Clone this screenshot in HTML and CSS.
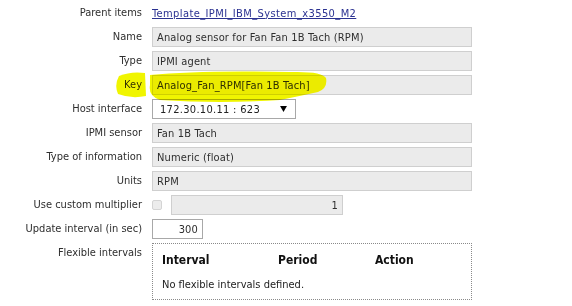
FILE: index.html
```html
<!DOCTYPE html>
<html>
<head>
  <title>Item</title>
  <link rel="stylesheet" href="styles.css">
</head>
<body>
  <div class="page">
    <div class="form">
      <div class="form-label">Parent items</div>
      <div class="form-field"><a class="parent-link" href="#">Template_IPMI_IBM_System_x3550_M2</a></div>

      <div class="form-label">Name</div>
      <div class="form-field"><input class="text-input" type="text" value="Analog sensor for Fan Fan 1B Tach (RPM)" readonly></div>

      <div class="form-label">Type</div>
      <div class="form-field"><input class="text-input" type="text" value="IPMI agent" readonly></div>

      <div class="form-label">Key</div>
      <div class="form-field"><input class="text-input" type="text" value="Analog_Fan_RPM[Fan 1B Tach]" readonly></div>

      <div class="form-label">Host interface</div>
      <div class="form-field">
        <div class="select-box">
          <span>172.30.10.11 : 623</span>
          <svg class="select-arrow" viewBox="0 0 8 7"><path d="M0 0h8L4 7z" fill="#000"/></svg>
        </div>
      </div>

      <div class="form-label">IPMI sensor</div>
      <div class="form-field"><input class="text-input" type="text" value="Fan 1B Tach" readonly></div>

      <div class="form-label">Type of information</div>
      <div class="form-field"><input class="text-input" type="text" value="Numeric (float)" readonly></div>

      <div class="form-label">Units</div>
      <div class="form-field"><input class="text-input" type="text" value="RPM" readonly></div>

      <div class="form-label">Use custom multiplier</div>
      <div class="form-field multiplier-row">
        <span class="checkbox"></span>
        <input class="text-input multiplier-input" type="text" value="1" readonly>
      </div>

      <div class="form-label">Update interval (in sec)</div>
      <div class="form-field"><input class="number-input" type="text" value="300"></div>

      <div class="form-label">Flexible intervals</div>
      <div class="form-field">
        <div class="flex-box">
          <div class="flex-head">
            <span class="col-interval">Interval</span>
            <span class="col-period">Period</span>
            <span class="col-action">Action</span>
          </div>
          <div class="flex-empty">No flexible intervals defined.</div>
        </div>
      </div>
    </div>

    <!-- marker scribble over the key row -->
    <svg class="highlight" width="572" height="306" viewBox="0 0 572 306">
      <path d="M119 76 Q131 71 145 73 L146 96 Q131 99 118 94 Q114 85 119 76 Z" fill="#f0f500"/>
      <path d="M150 75 Q200 70 290 72 Q322 71 326 78 Q328 88 318 92 Q300 96 280 100 Q220 104 160 100 Q148 96 150 85 Z" fill="#f0f500"/>
    </svg>
  </div>
</body>
</html>
```

FILE: styles.css
```css
body {
  margin: 0;
  font-family: "DejaVu Sans Condensed", "DejaVu Sans", sans-serif;
  font-size: 11px;
  color: #333;
  background: #ffffff;
}

.page {
  position: relative;
  width: 572px;
  height: 306px;
  overflow: hidden;
}

.form {
  display: grid;
  grid-template-columns: 142px 320px;
  column-gap: 10px;
  row-gap: 4px;
  padding-top: 3px;
}

.form-label {
  text-align: right;
  line-height: 20px;
  color: #2e2e2e;
}

.form-field {
  display: flex;
  align-items: center;
  min-height: 20px;
}

.parent-link {
  color: #2a3191;
  text-decoration: underline;
  letter-spacing: 0.4px;
}

.text-input,
.number-input {
  box-sizing: border-box;
  height: 20px;
  font: inherit;
  letter-spacing: 0.15px;
  color: #2e2e2e;
  border: 1px solid #cfcfcf;
  background: #ebebeb;
  padding: 0 4px;
  outline: none;
}

.text-input {
  width: 320px;
}

.select-box {
  box-sizing: border-box;
  width: 144px;
  height: 20px;
  display: flex;
  align-items: center;
  justify-content: space-between;
  padding: 0 8px 0 7px;
  border: 1px solid #a8a8a8;
  background: #fff;
  color: #222;
  letter-spacing: 0.3px;
}

.select-arrow {
  width: 7px;
  height: 6px;
}

.multiplier-row {
  gap: 9px;
}

.checkbox {
  box-sizing: border-box;
  width: 10px;
  height: 10px;
  border: 1px solid #d4d4d4;
  border-radius: 2px;
  background: #ececec;
}

.multiplier-input {
  width: 172px;
  text-align: right;
}

.number-input {
  width: 51px;
  text-align: right;
  background: #fff;
  border-color: #a8a8a8;
}

.flex-box {
  box-sizing: border-box;
  width: 320px;
  height: 57px;
  border: 1px dotted #8a8a8a;
  padding: 7px 9px 0;
}

.flex-head {
  display: flex;
  font-weight: bold;
  font-size: 12px;
  color: #111;
  line-height: 18px;
}

.col-interval {
  width: 116px;
}

.col-period {
  width: 97px;
}

.flex-empty {
  margin-top: 9px;
  color: #222;
}

.highlight {
  position: absolute;
  top: 0;
  left: 0;
  pointer-events: none;
  mix-blend-mode: darken;
}
```
